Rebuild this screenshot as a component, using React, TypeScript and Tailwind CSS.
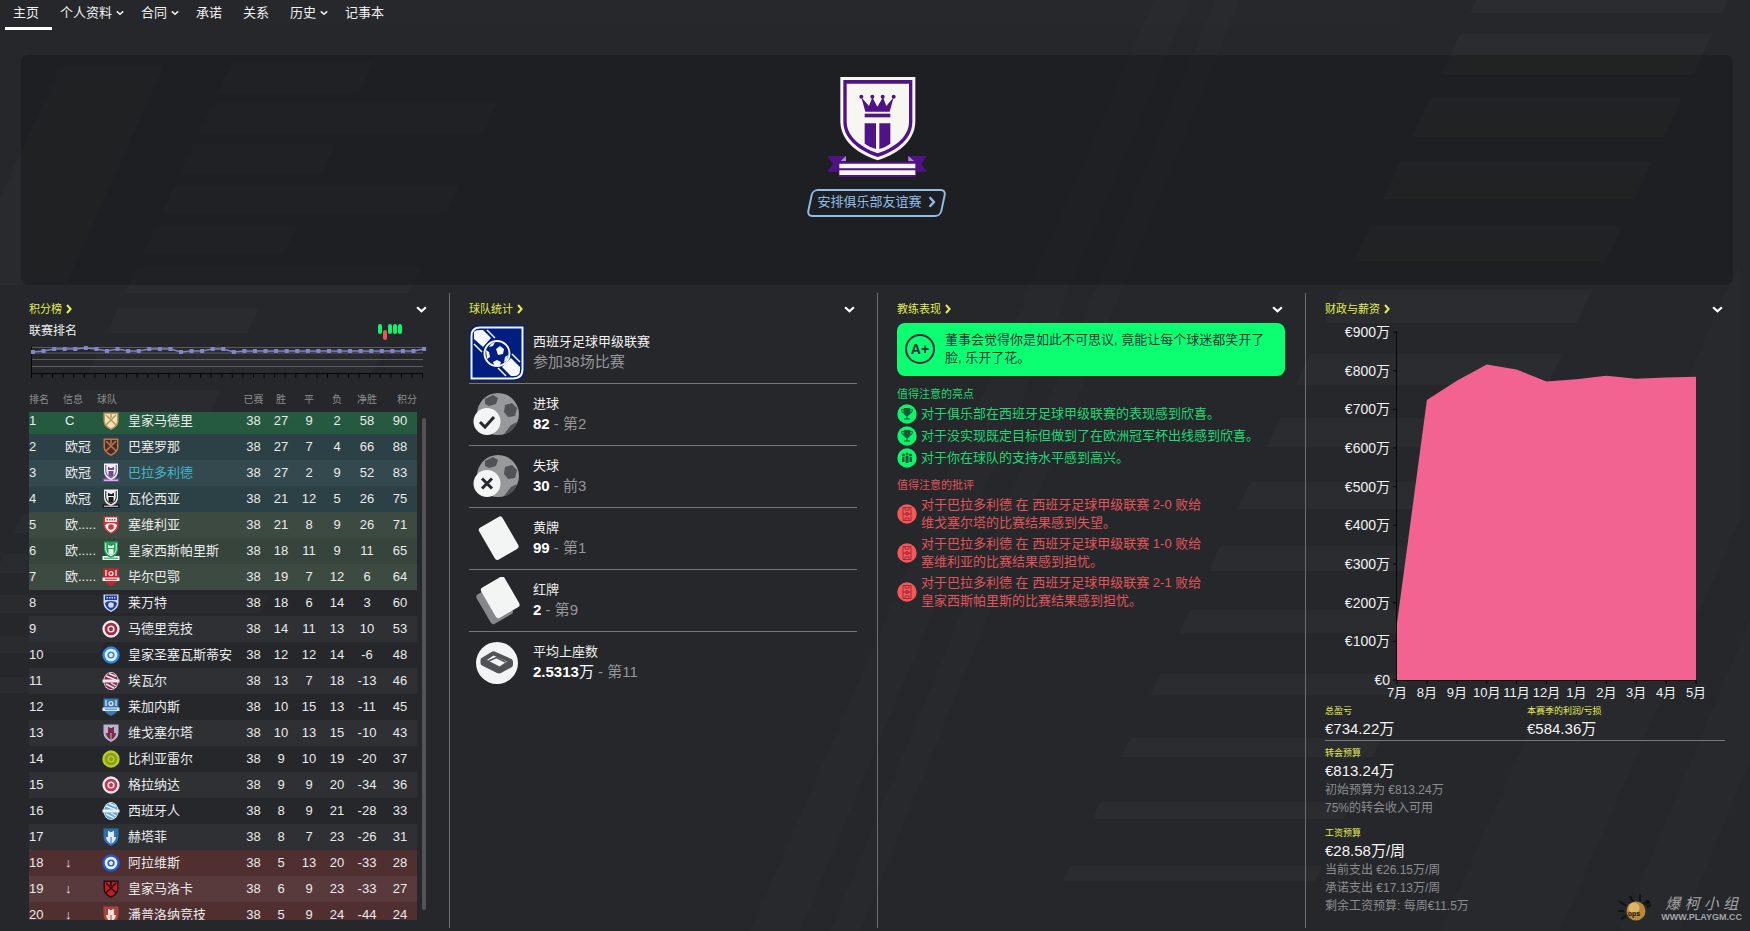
import { useState } from "react";
import type { ReactNode } from "react";
import { clsx } from "clsx";

type CrestShape =
  | "shield"
  | "tower"
  | "banner"
  | "scroll"
  | "round"
  | "oval"
  | "cross";

interface Team {
  info: string;
  name: string;
  shape: CrestShape;
  main: string;
  trim: string;
  stats: [number, number, number, number, number, number];
}

const navItems = [
  { label: "主页" },
  { label: "个人资料", menu: true },
  { label: "合同", menu: true },
  { label: "承诺" },
  { label: "关系" },
  { label: "历史", menu: true },
  { label: "记事本" }
];

const teams: Team[] = [
  { info: "C", name: "皇家马德里", shape: "cross", main: "#efe3c0", trim: "#b89a5a", stats: [38, 27, 9, 2, 58, 90] },
  { info: "欧冠", name: "巴塞罗那", shape: "cross", main: "#4a2a2c", trim: "#b87a45", stats: [38, 27, 7, 4, 66, 88] },
  { info: "欧冠", name: "巴拉多利德", shape: "tower", main: "#f3eef7", trim: "#6f4a92", stats: [38, 27, 2, 9, 52, 83] },
  { info: "欧冠", name: "瓦伦西亚", shape: "tower", main: "#eeeeee", trim: "#1d1d1f", stats: [38, 21, 12, 5, 26, 75] },
  { info: "欧.....", name: "塞维利亚", shape: "shield", main: "#fbf4f2", trim: "#d2343c", stats: [38, 21, 8, 9, 26, 71] },
  { info: "欧.....", name: "皇家西斯帕里斯", shape: "tower", main: "#1fa35c", trim: "#e8f5ec", stats: [38, 18, 11, 9, 11, 65] },
  { info: "欧.....", name: "毕尔巴鄂", shape: "banner", main: "#c3262f", trim: "#f6e9e8", stats: [38, 19, 7, 12, 6, 64] },
  { info: "", name: "莱万特", shape: "shield", main: "#233a9c", trim: "#c9d8f5", stats: [38, 18, 6, 14, 3, 60] },
  { info: "", name: "马德里竞技", shape: "round", main: "#a32a45", trim: "#f4e9ec", stats: [38, 14, 11, 13, 10, 53] },
  { info: "", name: "皇家圣塞瓦斯蒂安", shape: "round", main: "#e3f1ff", trim: "#2a86e8", stats: [38, 12, 12, 14, -6, 48] },
  { info: "", name: "埃瓦尔", shape: "oval", main: "#8c2a55", trim: "#f3e6ec", stats: [38, 13, 7, 18, -13, 46] },
  { info: "", name: "莱加内斯", shape: "banner", main: "#3a78b8", trim: "#dcebf7", stats: [38, 10, 15, 13, -11, 45] },
  { info: "", name: "维戈塞尔塔", shape: "scroll", main: "#7a2a48", trim: "#b9b3cc", stats: [38, 10, 13, 15, -10, 43] },
  { info: "", name: "比利亚雷尔", shape: "round", main: "#8f9c1c", trim: "#b8cc2c", stats: [38, 9, 10, 19, -20, 37] },
  { info: "", name: "格拉纳达", shape: "round", main: "#c23a52", trim: "#f6e8ea", stats: [38, 9, 9, 20, -34, 36] },
  { info: "", name: "西班牙人", shape: "oval", main: "#5fa4d8", trim: "#e6f2fb", stats: [38, 8, 9, 21, -28, 33] },
  { info: "", name: "赫塔菲", shape: "scroll", main: "#dcebf7", trim: "#2f6fae", stats: [38, 8, 7, 23, -26, 31] },
  { info: "↓", name: "阿拉维斯", shape: "round", main: "#e6efff", trim: "#2458d8", stats: [38, 5, 13, 20, -33, 28] },
  { info: "↓", name: "皇家马洛卡", shape: "cross", main: "#c41d28", trim: "#2a0c0e", stats: [38, 6, 9, 23, -33, 27] },
  { info: "↓", name: "潘普洛纳竞技", shape: "scroll", main: "#f3dfd8", trim: "#a8443c", stats: [38, 5, 9, 24, -44, 24] }
];

const rankHistory = [
  7, 6, 4, 4, 4, 3, 4, 6, 4, 6, 6, 4, 4, 4, 7, 6, 6, 4, 4, 7, 6, 6, 6, 6, 6, 6,
  6, 6, 6, 6, 6, 6, 6, 6, 6, 6, 6, 4
];

const balance = [
  { month: "7月", value: 147 },
  { month: "8月", value: 724 },
  { month: "9月", value: 774 },
  { month: "10月", value: 816 },
  { month: "11月", value: 803 },
  { month: "12月", value: 772 },
  { month: "1月", value: 778 },
  { month: "2月", value: 787 },
  { month: "3月", value: 779 },
  { month: "4月", value: 782 },
  { month: "5月", value: 784 }
];

const highlights = [
  { icon: "cup", text: "对于俱乐部在西班牙足球甲级联赛的表现感到欣喜。" },
  { icon: "cup", text: "对于没实现既定目标但做到了在欧洲冠军杯出线感到欣喜。" },
  { icon: "squad", text: "对于你在球队的支持水平感到高兴。" }
];

const criticisms = [
  "对于巴拉多利德 在 西班牙足球甲级联赛 2-0 败给维戈塞尔塔的比赛结果感到失望。",
  "对于巴拉多利德 在 西班牙足球甲级联赛 1-0 败给塞维利亚的比赛结果感到担忧。",
  "对于巴拉多利德 在 西班牙足球甲级联赛 2-1 败给皇家西斯帕里斯的比赛结果感到担忧。"
];

function rowColor(position: number): string {
  const odd = position % 2 === 1;
  if (position === 1) return "bg-[#265a40]";
  if (position <= 4) return odd ? "bg-[#34494d]" : "bg-[#2c4145]";
  if (position <= 7) return odd ? "bg-[#3d4a42]" : "bg-[#36443c]";
  if (position >= 18) return odd ? "bg-[#593a3c]" : "bg-[#502f31]";
  return odd ? "bg-[#2e3034]" : "";
}

function Backdrop() {
  const right = Array.from({ length: 15 }, (_, i) => {
    const y = -30 + i * 64;
    const h = 43 - i * 2;
    const x = 1490 - i * 30;
    return `M${x} ${y}h252l${-h * 0.46} ${h}h-252z`;
  });
  const left = Array.from({ length: 16 }, (_, i) => {
    const y = 62 + i * 41;
    const h = 31 - i;
    const x = 232 - i * 19;
    const w = i % 2 === 0 ? 141 : 284;
    return `M${x} ${y}h${w}l${-h * 0.46} ${h}h${-w}z`;
  });
  return (
    <svg
      aria-hidden="true"
      className="absolute inset-0 h-full w-full"
      viewBox="0 0 1750 931"
      preserveAspectRatio="none"
      fill="#fff"
    >
      <path d={right.join("")} opacity=".022" />
      <path d={left.join("")} opacity=".018" />
      <path d="M60 66H164L66 285H-40z" opacity=".015" />
      <path d="M247 25H1400V-10H262z" opacity=".008" />
      <path d="M1154 0H1190L800 931H750z" opacity=".012" />
      <path d="M1215 0H1240L860 931H830z" opacity=".012" />
      <path d="M1740 260V520L1560 931H1440z" opacity=".012" />
      <path d="M1750 620V760L1680 931H1620z" opacity=".012" />
    </svg>
  );
}

function Chevron({ direction, className }: { direction: "down" | "right"; className?: string }) {
  return (
    <svg
      aria-hidden="true"
      viewBox="0 0 10 10"
      className={className}
      fill="none"
      stroke="currentColor"
      strokeWidth="2"
    >
      <path d={direction === "down" ? "M1 3l4 3.6L9 3" : "M3 1l3.6 4L3 9"} />
    </svg>
  );
}

function ClubCrest() {
  return (
    <svg viewBox="140 45 300 306" className="w-[100px]" role="img" aria-label="巴拉多利德">
      <g fill="#4f1287">
        <path d="M141 288H197V350H175V335H141L158 312z" />
        <path d="M440 288H384V350H407V335H440L423 312z" />
        <path d="M175 305H407V351H175z" />
      </g>
      <path d="M181 303L197 288V303zM401 303L384 288V303z" fill="#b08cc8" />
      <path d="M177 311H405V325H177zM177 331H405V345H177z" fill="#f8f6f0" />
      <path d="M180 51H405V182C405 236 365 276 292 301C220 276 180 236 180 182z" fill="#f8f6f0" />
      <path d="M189 60H396V185C396 232 356 270 292 291C230 270 189 232 189 185z" fill="#4f1287" />
      <path d="M199 71H386V185C386 226 350 260 292 280C236 260 199 226 199 185z" fill="#f8f6f0" />
      <g fill="#4f1287">
        <path d="M255 155L243 112L266 138L276 112L291 140L308 112L318 138L340 112L328 155z" />
        <circle cx="243" cy="110" r="6" />
        <circle cx="276" cy="110" r="6" />
        <circle cx="307" cy="110" r="6" />
        <circle cx="340" cy="110" r="6" />
        <path d="M253 161H330V172H253z" />
        <path d="M253 190H287V267Q268 262 253 251z" />
        <path d="M297 190H330V251Q316 262 297 267z" />
      </g>
    </svg>
  );
}

function Crest({ shape, main, trim }: Pick<Team, "shape" | "main" | "trim">) {
  const outline = "M2.500 1.500H17.500V10Q17.500 15.500 10 19Q2.500 15.500 2.500 10z";
  return (
    <span className="flex w-[18px] shrink-0 justify-center">
      <svg
        viewBox="0 0 20 20"
        aria-hidden="true"
        className={clsx("block shrink-0", shape === "round" ? "size-[18px]" : "size-5")}
      >
        {shape === "round" ? (
          <>
            <circle cx="10" cy="10" r="9.600" fill={trim} />
            <circle cx="10" cy="10" r="7" fill={main} />
            <circle cx="10" cy="10" r="4" fill={trim} />
            <path d="M10 7.500l2.400 1.800-.9 2.900h-3l-.9-2.900z" fill={main} />
          </>
        ) : shape === "oval" ? (
          <>
            <ellipse cx="10" cy="10" rx="7.600" ry="9" fill={trim} />
            <ellipse cx="10" cy="10" rx="6.800" ry="8.200" fill={main} />
            <path d="M5 5l10 4M8 2.500l7 3M5 13l8 4M10 12l5 3" stroke={trim} strokeWidth="1.400" />
            <path d="M1.500 8.500H18.500V11.500H1.500z" fill={trim} />
          </>
        ) : shape === "tower" ? (
          <>
            <path d="M1.500 15H18.500V19H1.500z" fill={trim} />
            <path d="M3 .5H17V9Q17 14 10 17Q3 14 3 9z" fill={main} />
            <path d="M4.800 2V9Q5 12.500 10 15Q15 12.500 15.200 9V2" fill="none" stroke={trim} />
            <path d="M7 4h1.500v1h3V4H13v3H7zM7.500 8h5v5l-2.500 1-2.500-1z" fill={trim} />
            <path d="M3 17.200H17" stroke={main} />
          </>
        ) : shape === "banner" ? (
          <>
            <path d="M2.500 1.500H17.500V10Q17.500 16 10 19Q2.500 16 2.500 10z" fill={main} />
            <path d="M5 3v6M15 3v6" stroke={trim} strokeWidth="1.200" />
            <circle cx="10" cy="6.500" r="2.600" fill={trim} />
            <circle cx="10" cy="6.500" r="1.300" fill={main} />
            <path d="M1.500 10.500H18.500V14H1.500z" fill={trim} />
            <path d="M4 12.200H16" stroke={main} />
          </>
        ) : shape === "scroll" ? (
          <>
            <path d={outline} fill={trim} />
            <path d="M5 10H15Q15 14 10 17Q5 14 5 10z" fill={main} />
            <path d="M7 4h1.500v1h3V4H13v6H7z" fill={main} />
            <path d="M10 10v7" stroke={trim} />
          </>
        ) : shape === "cross" ? (
          <>
            <path d={outline} fill={trim} />
            <path d="M4 3H16V10Q16 14.500 10 17.200Q4 14.500 4 10z" fill={main} />
            <path d="M5 4l10 10M15 4L5 14M10 3v4" stroke={trim} strokeWidth="1.600" />
          </>
        ) : (
          <>
            <path d={outline} fill={trim} />
            <path d="M4 2.500H16V7H4zM4 10Q6 8 10 8T16 10Q15.500 15 10 17.500Q4.500 15 4 10z" fill={main} />
            <path d="M5.500 4.700H14.500" stroke={trim} strokeWidth="1.600" strokeDasharray="1.500 1" />
            <circle cx="10" cy="12" r="2.800" fill={trim} />
          </>
        )}
      </svg>
    </span>
  );
}

function Panel({ title, className, children }: { title: string; className?: string; children: ReactNode }) {
  const [open, setOpen] = useState(true);
  return (
    <section className={clsx("min-w-0", className)}>
      <header className="flex h-[30px] items-center justify-between pt-0.5 text-[11px]">
        <a href="#" className="flex items-center gap-0.5 text-[#e4ed55]">
          <h2>{title}</h2>
          <Chevron direction="right" className="size-2.5" />
        </a>
        <button
          type="button"
          aria-label={title}
          aria-expanded={open}
          className="flex w-4 justify-center text-white"
          onClick={() => setOpen(!open)}
        >
          <Chevron direction="down" className="size-[11px]" />
        </button>
      </header>
      {open ? children : null}
    </section>
  );
}

function RankChart() {
  const x = (i: number) => 4 + i * 10.57;
  return (
    <svg viewBox="0 0 400 34" className="mt-1.5 w-full" role="img" aria-label="联赛排名">
      <path d="M2 2.500H394M2 8H394M2 14.500H394M2 21.500H394" stroke="#5b5c5e" />
      <path d="M2.500 2V29M2 28.500H394" stroke="#050505" />
      {rankHistory.map((_, i) => (
        <path key={i} d={`M${2.5 + i * 10.57} 28v5`} stroke="#050505" />
      ))}
      <polyline
        points={rankHistory.map((y, i) => `${x(i)},${y}`).join(" ")}
        fill="none"
        stroke="#7d83c6"
        strokeWidth="1.500"
      />
      {rankHistory.map((y, i) => (
        <rect key={i} x={x(i) - 2} y={y - 2} width="4" height="4" fill="#8087cb" />
      ))}
    </svg>
  );
}

function LeagueTable() {
  return (
    <div className="mt-[9px] mr-[3px] flex h-[532px] gap-[5px] overflow-hidden">
      <table className="min-w-0 flex-1 table-fixed border-collapse text-[13px] leading-4">
        <colgroup>
          <col className="w-[34px]" />
          <col className="w-[34px]" />
          <col />
          <col className="w-[27px]" />
          <col className="w-[28px]" />
          <col className="w-[28px]" />
          <col className="w-[28px]" />
          <col className="w-[32px]" />
          <col className="w-[34px]" />
        </colgroup>
        <thead>
          <tr className="h-6 text-[10px] whitespace-nowrap text-[#8d8e90] [&>th]:font-normal">
            <th scope="col" className="text-left">排名</th>
            <th scope="col" className="text-left">信息</th>
            <th scope="col" className="text-left">球队</th>
            <th scope="col">已赛</th>
            <th scope="col">胜</th>
            <th scope="col">平</th>
            <th scope="col">负</th>
            <th scope="col">净胜</th>
            <th scope="col" className="text-right">积分</th>
          </tr>
        </thead>
        <tbody>
          {teams.map((team, i) => (
            <tr
              key={team.name}
              className={clsx(
                "text-[#e9eaea]",
                i === 0 ? "h-[22px] [&>td]:pb-1" : "h-[26px]",
                rowColor(i + 1)
              )}
            >
              <td>{i + 1}</td>
              <td className="pl-0.5 whitespace-nowrap">{team.info}</td>
              <td>
                <div className="flex h-4 items-center gap-2 pl-[5px] whitespace-nowrap">
                  <Crest shape={team.shape} main={team.main} trim={team.trim} />
                  <a href="#" className={team.name === "巴拉多利德" ? "text-[#41b6cb]" : undefined}>
                    {team.name}
                  </a>
                </div>
              </td>
              {team.stats.map((value, n) => (
                <td key={n} className="text-center">
                  {value}
                </td>
              ))}
            </tr>
          ))}
        </tbody>
      </table>
      <div className="mt-[30px] mb-2.5 w-1 rounded-full bg-[#515356]" />
    </div>
  );
}

function FormBars() {
  return (
    <span className="flex gap-px pt-px pr-[27px]" aria-hidden="true">
      {["W", "L", "W", "W", "W"].map((result, i) => (
        <span
          key={i}
          className={clsx("h-2.5 w-1 rounded-full", result === "W" ? "bg-[#0cf56c]" : "mt-1.5 bg-[#e8555b]")}
        />
      ))}
    </span>
  );
}

function LeagueBadge() {
  return (
    <svg viewBox="0 0 56 56" className="size-14 shrink-0" aria-hidden="true">
      <path d="M11 0H56V44Q56 56 44 56H0V11Q0 0 11 0z" fill="#001d80" />
      <path d="M11 2.500H53.500V44Q53.500 53.500 44 53.500H2.500V11Q2.500 2.500 11 2.500z" fill="none" stroke="#f2f6ff" strokeWidth="2" />
      <path d="M5 7Q6 5 11 5H14L22 13L14 22L5 14zM42 33L51 42V45Q51 51 45 51H42L33 42z" fill="#f5f8ff" />
      <path d="M18 5L26 13M43 29L51 37M5 19L13 27M29 43L37 51" stroke="#f5f8ff" strokeWidth="1.500" />
      <circle cx="28" cy="28.500" r="12.500" fill="#001d80" stroke="#f5f8ff" strokeWidth="2" />
      <path d="M27 24l4-3 4 3-1 5-5 1zM17 25l3 2 1 5-3 2M24 37l4-2 4 2-1 3h-6zM36 32l3-2-1 5-3 2zM22 19l4-2-2 4-4 1z" fill="#f5f8ff" />
    </svg>
  );
}

function BallIcon({ mark }: { mark: "check" | "cross" }) {
  return (
    <svg viewBox="0 0 48 44" className="w-12" aria-hidden="true">
      <circle cx="25" cy="21" r="21" fill="#97999b" />
      <path d="M12 6l8-4 5 3-2 6-7 2-4-2zM32 12l7-2 5 5-2 8-7 1-4-5zM31 41l7-9 6-3Q41 39 31 41z" fill="#505255" />
      <circle cx="14" cy="28.500" r="13.500" fill="#f3f4f4" />
      <path
        d={mark === "check" ? "M7 29l5 5L21 24" : "M9 23.500L19 33.500M19 23.500L9 33.500"}
        fill="none"
        stroke="#26282b"
        strokeWidth="3"
      />
    </svg>
  );
}

function CardIcon({ stacked }: { stacked?: boolean }) {
  return (
    <svg viewBox="0 0 48 48" className="w-12" aria-hidden="true">
      {stacked ? (
        <rect x="9" y="10" width="25" height="34" rx="3" fill="#85878a" transform="rotate(-30 22 27)" />
      ) : null}
      {stacked ? (
        <rect x="14" y="3" width="27" height="35" rx="3" fill="#f3f4f4" transform="rotate(-30 27 21)" />
      ) : (
        <rect x="12" y="5" width="27" height="37" rx="3" fill="#f3f4f4" transform="rotate(-30 25 23)" />
      )}
    </svg>
  );
}

function StadiumIcon() {
  return (
    <svg viewBox="0 0 42 42" className="size-[42px]" aria-hidden="true">
      <circle cx="21" cy="21" r="21" fill="#f3f4f4" />
      <path d="M18.500 9.500L35.500 17Q37 18 37 20V23Q37 24.500 35.500 25.200L25 31Q23 31.800 21 31L6 23.500Q4.500 22.500 4.500 21V18Q4.500 16.500 6 15.700L15.500 10Q17 9 18.500 9.500z" fill="#505255" />
      <path d="M17.500 13.500L31 19.500L23.500 24.500L11 18z" fill="#f3f4f4" />
      <path d="M12.500 19l8-3.500 9 4.500" fill="none" stroke="#505255" strokeWidth="1.500" />
    </svg>
  );
}

function StatRow({
  icon,
  label,
  value,
  unit,
  rank,
  last
}: {
  icon: ReactNode;
  label: string;
  value: string;
  unit?: string;
  rank: string;
  last?: boolean;
}) {
  return (
    <li className={clsx("flex h-[62px] items-center gap-2", !last && "border-b border-[#76777a]")}>
      <span className="flex w-14 justify-center">{icon}</span>
      <span className="pb-0.5">
        <span className="block text-[13px] leading-5">{label}</span>
        <span className="block text-[15px] leading-5 text-[#95969a]">
          <strong className="text-white">{value}</strong>
          {unit ? <span className="text-white">{unit}</span> : null} - {rank}
        </span>
      </span>
    </li>
  );
}

function NoteIcon({ kind }: { kind: string }) {
  return (
    <svg
      viewBox="0 0 20 20"
      aria-hidden="true"
      className={clsx("size-5 shrink-0", kind === "pitch" ? "text-[#f5575b]" : "text-[#0cf56c]")}
    >
      <circle cx="10" cy="10" r="9.700" fill="currentColor" />
      {kind === "cup" ? (
        <g stroke="#175c39" fill="none">
          <path d="M7 4.500h6V9q-.5 2.500-3 2.500T7 9z" fill="#175c39" />
          <path d="M7 5.500H4.500q0 3.500 3 4M13 5.500h2.500q0 3.500-3 4M10 11v4M7 15h6" />
        </g>
      ) : kind === "squad" ? (
        <g fill="#175c39">
          <circle cx="6.500" cy="7" r="1.500" />
          <circle cx="10" cy="6" r="1.500" />
          <circle cx="13.500" cy="7" r="1.500" />
          <path d="M5 9h2.500v5H5zM8.500 8h3v7h-3zM12.500 9H15v5h-2.500z" />
        </g>
      ) : (
        <g stroke="#9c2f35" fill="none">
          <path d="M6 3.500h8v13H6zM6 10h8M8 3.500V6h4V3.500M8 16.500V14h4v2.500" />
          <circle cx="10" cy="10" r="1.500" />
        </g>
      )}
    </svg>
  );
}

function BalanceChart() {
  const x = (i: number) => 72 + i * 29.9;
  const y = (value: number) => 357 - value * 0.3867;
  const area = balance.map((p, i) => `${x(i)},${y(p.value)}`).join(" ");
  return (
    <svg
      viewBox="0 0 400 380"
      className="w-full overflow-visible"
      role="img"
      aria-label="财政与薪资"
      fontSize="14"
      fill="#f1f1f1"
    >
      <polygon points={`72,357 ${area} ${x(10)},357`} fill="#f26391" />
      <path d={`M71.500 9V358M71 357.500H${x(10)}`} stroke="#050505" />
      {[0, 100, 200, 300, 400, 500, 600, 700, 800, 900].map((value) => (
        <g key={value}>
          <path d={`M68 ${y(value)}h4`} stroke="#050505" />
          <text x="65" y={y(value) + 5} textAnchor="end">
            {value === 0 ? "€0" : `€${value}万`}
          </text>
        </g>
      ))}
      {balance.map((p, i) => (
        <g key={p.month}>
          <path d={`M${x(i)} 357v4`} stroke="#050505" />
          <text x={x(i)} y="374" textAnchor="middle" fontSize="13">
            {p.month}
          </text>
        </g>
      ))}
    </svg>
  );
}

function Figure({ label, value, notes = [] }: { label: string; value: string; notes?: string[] }) {
  return (
    <div>
      <h3 className="text-[9px] leading-4 text-[#e4ed55]">{label}</h3>
      <p className="text-[15px] leading-5 text-[#f5f5f5]">{value}</p>
      {notes.map((note) => (
        <p key={note} className="text-[12px] leading-[18px] text-[#8b8c8f]">
          {note}
        </p>
      ))}
    </div>
  );
}

function Watermark() {
  return (
    <div className="absolute right-2 bottom-1.5 flex items-center gap-2">
      <svg viewBox="0 0 36 32" className="w-9" aria-hidden="true">
        <path
          d="M2 8l7 5M1 18h6M4 26l5-3M13 3l3 6M23 1v7M31 7l-4 4 6-1M34 12l-4 2"
          stroke="#111214"
          strokeWidth="2"
        />
        <circle cx="19" cy="18" r="9.500" fill="#b9893c" />
        <circle cx="17" cy="15" r="5.500" fill="#dcb566" />
        <text x="17" y="23" textAnchor="middle" fontSize="7" fontWeight="700" fill="#1a1408">
          ops
        </text>
      </svg>
      <div className="text-[#a3a4a6]">
        <div className="flex justify-between px-1 text-[15px] leading-4 italic">
          <span>爆</span>
          <span>柯</span>
          <span>小</span>
          <span>组</span>
        </div>
        <div className="text-[9px] leading-[10px] font-bold">WWW.PLAYGM.CC</div>
      </div>
    </div>
  );
}

export default function App() {
  return (
    <div className="relative flex min-h-screen flex-col overflow-hidden bg-[#25272a] font-['Liberation_Sans','Noto_Sans_CJK_SC',sans-serif] text-[#f1f1f1]">
      <Backdrop />
      <nav className="relative flex h-[30px] pl-[5px] text-[13px]">
        {navItems.map((item, i) => (
          <a
            key={item.label}
            href="#"
            aria-current={i === 0 ? "page" : undefined}
            className={clsx(
              "flex items-center gap-1 border-b-3 pb-0.5 pl-2 leading-4",
              item.menu ? "pr-[9px]" : "pr-[13px]",
              i === 0 ? "border-white" : "border-transparent"
            )}
          >
            {item.label}
            {item.menu ? <Chevron direction="down" className="size-2" /> : null}
          </a>
        ))}
      </nav>

      <section className="relative mt-[25px] mr-[17px] ml-[21px] flex h-[230px] flex-col items-center rounded-lg bg-[#16171a]/50 pt-5">
        <ClubCrest />
        <button
          type="button"
          className="relative mt-3 flex h-7 items-center gap-1 pr-2.5 pb-0.5 pl-[11px] text-[13px] text-[#8fbde8] before:absolute before:inset-x-[3px] before:inset-y-0 before:-skew-x-12 before:rounded-md before:border-2 before:border-[#8fbde8]"
        >
          安排俱乐部友谊赛
          <Chevron direction="right" className="size-3" />
        </button>
      </section>

      <main className="relative mt-2 mr-4 mb-[3px] ml-[22px] grid flex-1 grid-cols-4">
        <Panel title="积分榜" className="border-r border-[#6d6e70] pr-5 pl-[7px]">
          <div className="flex h-4 justify-between text-[12px] leading-4">
            <h3>联赛排名</h3>
            <FormBars />
          </div>
          <RankChart />
          <LeagueTable />
        </Panel>

        <Panel title="球队统计" className="border-r border-[#6d6e70] pr-5 pl-[19px]">
          <ul className="-mt-px">
            <li className="flex h-[62px] items-center gap-2 border-b border-[#76777a]">
              <LeagueBadge />
              <span className="pb-0.5">
                <span className="block text-[13px] leading-5">西班牙足球甲级联赛</span>
                <span className="block text-[15px] leading-5 text-[#95969a]">参加38场比赛</span>
              </span>
            </li>
            <StatRow icon={<BallIcon mark="check" />} label="进球" value="82" rank="第2" />
            <StatRow icon={<BallIcon mark="cross" />} label="失球" value="30" rank="前3" />
            <StatRow icon={<CardIcon />} label="黄牌" value="99" rank="第1" />
            <StatRow icon={<CardIcon stacked />} label="红牌" value="2" rank="第9" />
            <StatRow icon={<StadiumIcon />} label="平均上座数" value="2.5313" unit="万" rank="第11" last />
          </ul>
        </Panel>

        <Panel title="教练表现" className="border-r border-[#6d6e70] pr-5 pl-[19px]">
          <div className="flex h-[53px] items-center gap-2.5 rounded-lg bg-[#0cff70] pr-4 pb-px pl-2 text-[#15383f]">
            <span className="flex size-[30px] shrink-0 items-center justify-center rounded-full border-2 border-[#0c2b42] text-[14px] font-bold text-[#0c2b42]">
              A+
            </span>
            <p className="text-[13px] leading-[18px]">
              董事会觉得你是如此不可思议, 竟能让每个球迷都笑开了脸, 乐开了花。
            </p>
          </div>
          <h3 className="mt-2.5 text-[11px] leading-4 text-[#1fd873]">值得注意的亮点</h3>
          <ul className="mt-px text-[13px] leading-[22px] text-[#1fd873]">
            {highlights.map((item) => (
              <li key={item.text} className="flex items-center gap-1">
                <NoteIcon kind={item.icon} />
                {item.text}
              </li>
            ))}
          </ul>
          <h3 className="mt-2 text-[11px] leading-4 text-[#e0555b]">值得注意的批评</h3>
          <ul className="mt-[3px] space-y-[3px] text-[13px] leading-[18px] text-[#e0555b]">
            {criticisms.map((text) => (
              <li key={text} className="flex items-center gap-1 pr-20">
                <NoteIcon kind="pitch" />
                {text}
              </li>
            ))}
          </ul>
        </Panel>

        <Panel title="财政与薪资" className="pr-[9px] pl-[19px]">
          <BalanceChart />
          <div className="grid grid-cols-2 gap-x-1 border-b border-[#76777a] pb-px">
            <Figure label="总盈亏" value="€734.22万" />
            <Figure label="本赛季的利润/亏损" value="€584.36万" />
          </div>
          <div className="mt-1 space-y-2">
            <Figure
              label="转会预算"
              value="€813.24万"
              notes={["初始预算为 €813.24万", "75%的转会收入可用"]}
            />
            <Figure
              label="工资预算"
              value="€28.58万/周"
              notes={["当前支出 €26.15万/周", "承诺支出 €17.13万/周", "剩余工资预算: 每周€11.5万"]}
            />
          </div>
        </Panel>
      </main>
      <Watermark />
    </div>
  );
}
